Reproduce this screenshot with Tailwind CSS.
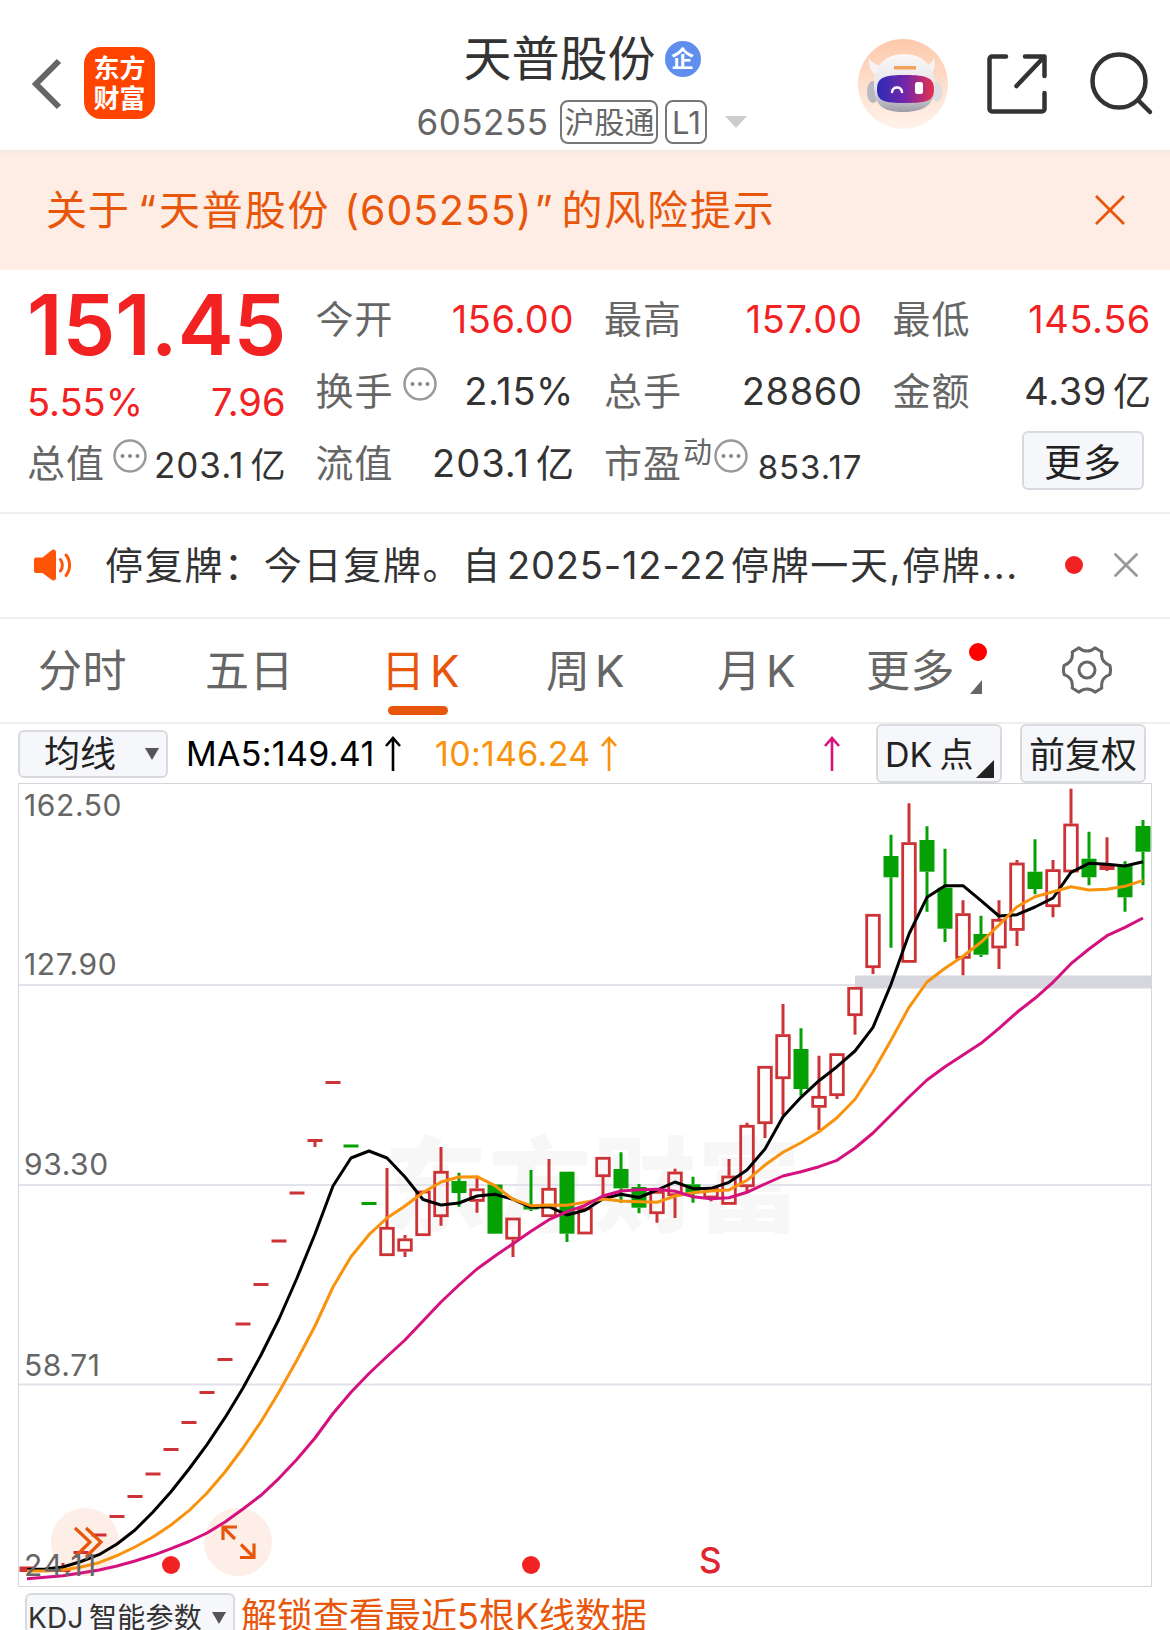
<!DOCTYPE html>
<html lang="zh-CN">
<head>
  <meta charset="UTF-8" />
  <title>天普股份 605255</title>
  <script src="https://cdn.jsdelivr.net/npm/@tailwindcss/browser@4"></script>
</head>
<body class="bg-white text-[#333] w-[1170px] h-[1630px] overflow-hidden font-['Inter','Noto_Sans_CJK_SC',sans-serif] leading-none whitespace-nowrap">

  <!-- Header -->
  <header class="h-[150px] flex items-start relative">
    <svg class="w-[40px] h-[60px] mt-[54px] ml-[26px]" viewBox="0 0 40 60" fill="none" stroke="#666" stroke-width="6"><path d="M33 7 10 30l23 23" /></svg>
    <div class="w-[71px] h-[72px] mt-[47px] ml-[18px] pb-[3px] rounded-[17px] bg-[#ff4400] text-white font-bold text-[26px] leading-[30px] flex flex-col items-center justify-center font-['Noto_Sans_CJK_SC',sans-serif]">
      <span>东方</span>
      <span>财富</span>
    </div>

    <div class="absolute left-[385px] w-[400px] top-0 flex flex-col items-center">
      <div class="flex items-center h-[48px] mt-[35px] gap-[9px] pr-[6px]">
        <h1 class="text-[48px]">天普股份</h1>
        <span class="size-[36px] rounded-full bg-[#5f8eee] text-white text-[23px] font-bold flex items-center justify-center">企</span>
      </div>
      <div class="flex items-center h-[44px] mt-[17px] pr-[6px] text-[#666]">
        <span class="text-[35px] tracking-[0.5px]">605255</span>
        <span class="ml-[12px] h-[44px] w-[98px] border-2 border-[#777] rounded-[8px] text-[30px] flex items-center justify-center">沪股通</span>
        <span class="ml-[7px] h-[44px] w-[42px] border-2 border-[#777] rounded-[8px] text-[31px] flex items-center justify-center">L1</span>
        <svg class="ml-[18px] w-[22px] h-[12px]" viewBox="0 0 22 12"><path d="M0 0h22L11 12z" fill="#ccc" /></svg>
      </div>
    </div>

    <!-- Robot assistant -->
    <svg class="ml-auto mt-[39px] w-[90px] h-[90px]" viewBox="0 0 90 90">
      <defs>
        <linearGradient id="halo" x1="0" y1="0" x2="0" y2="1"><stop offset="0" stop-color="#fdc9ab" /><stop offset="1" stop-color="#fff3ec" /></linearGradient>
        <linearGradient id="shell" x1="0" y1="0" x2="0" y2="1"><stop offset="0" stop-color="#fbf8f8" /><stop offset=".6" stop-color="#e6e3ea" /><stop offset="1" stop-color="#9d9ca6" /></linearGradient>
        <linearGradient id="visor" x1="0" y1="0" x2="1" y2="0"><stop offset="0" stop-color="#2b2bb8" /><stop offset=".5" stop-color="#7426a8" /><stop offset="1" stop-color="#e8304e" /></linearGradient>
      </defs>
      <circle cx="45" cy="45" r="45" fill="url(#halo)" />
      <path d="M11 19c-1 8 2 14 8 18l7-9c-6-1-12-4-15-9zM76 19c2 8 0 14-5 18l-7-9c6-1 10-4 12-9z" fill="#f7f3f4" />
      <ellipse cx="15" cy="53" rx="6" ry="11" fill="#b9b7c0" />
      <ellipse cx="79" cy="53" rx="5" ry="10" fill="#dedce2" />
      <path d="M16 48C15 27 27 15 46 15s31 13 31 32c0 17-9 26-32 26S17 64 16 48z" fill="url(#shell)" />
      <path d="M19 50c0-12 8-14 29-14s28 3 28 14-5 14-28 14-29-2-29-14z" fill="url(#visor)" />
      <path d="M36 27h22v3.500H36z" fill="#f0a25e" />
      <path d="M34 53c1-6 9-6 10 0" fill="none" stroke="#fff" stroke-width="2.500" stroke-linecap="round" />
      <rect x="57" y="43" width="8" height="12" rx="2.500" fill="#fff" />
    </svg>
    <svg class="ml-[36px] mt-[51px] w-[66px] h-[66px]" viewBox="0 0 66 66" fill="none" stroke="#333" stroke-width="4.500" stroke-linecap="round" stroke-linejoin="round">
      <path d="M22 5.500H8a2.500 2.500 0 0 0-2.500 2.500v50A2.500 2.500 0 0 0 8 60.500h50a2.500 2.500 0 0 0 2.500-2.500V42M41 5.500h19.500V25M60 6 32.500 35" />
    </svg>
    <svg class="ml-[37px] mr-[14px] mt-[49px] w-[69px] h-[68px]" viewBox="0 0 69 68" fill="none" stroke="#333" stroke-width="4.500" stroke-linecap="round">
      <circle cx="32" cy="32" r="26.500" /><path d="m51 51 12 12" />
    </svg>
  </header>

  <!-- Risk banner -->
  <div class="h-[120px] pb-[3px] bg-[#fdede4] border-t-[3px] border-[#f3ebe6] flex items-center pl-[46px] pr-[45px] text-[#e8560c] text-[41px]">
    <span class="tracking-[1px]">关于</span>
    <span class="ml-[8px]">“</span>
    <span class="ml-[3px] tracking-[1.800px]">天普股份</span>
    <span class="ml-[14px] tracking-[0.900px]">(605255)</span>
    <span class="ml-[2px]">”</span>
    <span class="ml-[9px] tracking-[1.800px]">的风险提示</span>
    <svg class="ml-auto size-[30px]" viewBox="0 0 30 30" stroke="#e8560c" stroke-width="2.800"><path d="m1 1 28 28M29 1 1 29" /></svg>
  </div>

  <!-- Quote -->
  <section class="h-[244px] pt-[13px] pl-[27px] pr-[19px] border-b-2 border-[#eee] grid grid-cols-4 gap-x-[30px] text-[38px]">
    <div class="flex flex-col text-[#f22222]">
      <div class="h-[84px] flex items-center text-[84px] font-semibold">151.45</div>
      <div class="h-[60px] flex items-center justify-between pt-[10px]"><span>5.55%</span><span>7.96</span></div>
      <div class="h-[72px] flex items-center text-[#333]">
        <span class="text-[#666] tracking-[1px]">总值</span>
        <svg class="ml-[8px] mb-[14px] size-[34px] shrink-0" viewBox="0 0 34 34"><circle cx="17" cy="17" r="15.500" fill="none" stroke="#999" stroke-width="2.500" /><g fill="#888"><circle cx="9.500" cy="17" r="2" /><circle cx="17" cy="17" r="2" /><circle cx="24.500" cy="17" r="2" /></g></svg>
        <span class="ml-auto text-[35px] pt-[5px] tracking-[1px]">203.1<span class="ml-[6px] tracking-normal">亿</span></span>
      </div>
    </div>
    <div>
      <div class="h-[72px] flex items-center justify-between"><span class="text-[#666] tracking-[1px]">今开</span><span class="text-[#f22222] tracking-[0.600px]">156.00</span></div>
      <div class="h-[72px] flex items-center">
        <span class="text-[#666] tracking-[1px]">换手</span>
        <svg class="ml-[9px] mb-[14px] size-[34px] shrink-0" viewBox="0 0 34 34"><circle cx="17" cy="17" r="15.500" fill="none" stroke="#999" stroke-width="2.500" /><g fill="#888"><circle cx="9.500" cy="17" r="2" /><circle cx="17" cy="17" r="2" /><circle cx="24.500" cy="17" r="2" /></g></svg>
        <span class="ml-auto tracking-[0.600px]">2.15%</span>
      </div>
      <div class="h-[72px] flex items-center justify-between"><span class="text-[#666] tracking-[1px]">流值</span><span class="tracking-[1px]">203.1<span class="ml-[6px] tracking-normal">亿</span></span></div>
    </div>
    <div>
      <div class="h-[72px] flex items-center justify-between"><span class="text-[#666] tracking-[1px]">最高</span><span class="text-[#f22222] tracking-[0.600px]">157.00</span></div>
      <div class="h-[72px] flex items-center justify-between"><span class="text-[#666] tracking-[1px]">总手</span><span class="tracking-[0.600px]">28860</span></div>
      <div class="h-[72px] flex items-center">
        <span class="text-[#666] tracking-[1px]">市盈</span>
        <span class="text-[#666] text-[29px] mb-[22px] ml-[1px]">动</span>
        <svg class="ml-[2px] mb-[14px] size-[34px] shrink-0" viewBox="0 0 34 34"><circle cx="17" cy="17" r="15.500" fill="none" stroke="#999" stroke-width="2.500" /><g fill="#888"><circle cx="9.500" cy="17" r="2" /><circle cx="17" cy="17" r="2" /><circle cx="24.500" cy="17" r="2" /></g></svg>
        <span class="ml-auto text-[33px] pt-[9px] tracking-[1px]">853.17</span>
      </div>
    </div>
    <div>
      <div class="h-[72px] flex items-center justify-between"><span class="text-[#666] tracking-[1px]">最低</span><span class="text-[#f22222] tracking-[0.600px]">145.56</span></div>
      <div class="h-[72px] flex items-center justify-between"><span class="text-[#666] tracking-[1px]">金额</span><span class="tracking-[0.600px]">4.39<span class="ml-[6px] tracking-normal">亿</span></span></div>
      <div class="h-[72px] flex items-center justify-end pr-[7px]">
        <button class="w-[122px] h-[59px] mb-[5px] pt-[2px] rounded-[6px] border-2 border-[#d8dadf] bg-[#f6f7fa] text-[#222] tracking-[1px]">更多</button>
      </div>
    </div>
  </section>

  <!-- News ticker -->
  <div class="h-[105px] border-b-2 border-[#eee] flex items-center pl-[33px] pr-[32px] pb-[1px]">
    <svg class="w-[40px] h-[34px]" viewBox="0 0 40 34">
      <path d="M3 9.500h6.500L18.500 2.200c2.200-1.700 4.500-.5 4.500 2v25.600c0 2.500-2.300 3.700-4.500 2L9.500 25H3a2 2 0 0 1-2-2V11.500a2 2 0 0 1 2-2z" fill="#ff5508" />
      <path d="M27.500 11.500c2.300 3.500 2.300 8 0 11.500M33 7c4.800 6 4.800 14.500 0 20.500" fill="none" stroke="#ff5508" stroke-width="3" stroke-linecap="round" />
    </svg>
    <p class="ml-[32px] text-[38px] tracking-[1.700px]">停复牌：今日复牌。自<span class="ml-[5px] tracking-[0.800px]">2025-12-22</span><span class="ml-[4px] tracking-[1.600px]">停牌一天,停牌...</span></p>
    <span class="ml-auto size-[18px] rounded-full bg-[#f22222]"></span>
    <svg class="ml-[31px] size-[24px]" viewBox="0 0 24 24" stroke="#999" stroke-width="2.800" stroke-linecap="round"><path d="m1.500 1.500 21 21M22.500 1.500l-21 21" /></svg>
  </div>

  <!-- Period tabs -->
  <nav class="h-[105px] border-b-2 border-[#eee] flex items-center text-[44px] text-[#666] pl-[38px] pr-[58px]">
    <span class="w-[167px] tracking-[0.500px]">分时</span>
    <span class="w-[176px] tracking-[0.500px]">五日</span>
    <span class="w-[165px] h-full flex items-center relative text-[#e8560c]">日<span class="ml-[5px]">K</span>
      <i class="absolute left-[7px] bottom-[7px] w-[60px] h-[9px] rounded-full bg-[#e8560c]"></i>
    </span>
    <span class="w-[171px]">周<span class="ml-[5px]">K</span></span>
    <span class="w-[149px]">月<span class="ml-[5px]">K</span></span>
    <span class="relative tracking-[0.500px]">更多
      <i class="absolute left-[103px] top-[-6px] size-[18px] rounded-full bg-[#ff0000]"></i>
      <svg class="absolute left-[104px] top-[31px] w-[12px] h-[14px]" viewBox="0 0 12 14"><path d="M12 0v14H0z" fill="#666" /></svg>
    </span>
    <svg class="ml-auto mb-[2px] size-[50px]" viewBox="0 0 50 50" fill="none" stroke="#666" stroke-width="3" stroke-linejoin="round">
      <path d="M17 2.800c4.500 4.300 11.500 4.300 16 0l6.800 4.200c-1 6.300 1.600 11 8 13.300.9 3 .9 6.400 0 9.400-6.400 2.300-9 7-8 13.300L33 47.200c-4.500-4.300-11.500-4.300-16 0L10.200 43c1-6.300-1.600-11-8-13.300-.9-3-.9-6.400 0-9.400 6.400-2.300 9-7 8-13.300z" />
      <circle cx="25" cy="25" r="8" />
    </svg>
  </nav>

  <!-- Indicator bar -->
  <div class="h-[59px] flex items-center pl-[18px] pr-[24px] text-[34px]">
    <button class="w-[150px] h-[48px] rounded-[6px] border-2 border-[#d8dadf] bg-[#f6f7fa] text-[#222] text-[36px] pt-[1px] flex items-center justify-between pl-[24px] pr-[7px]">均线
      <svg class="w-[14px] h-[12px]" viewBox="0 0 14 12"><path d="M0 0h14L7 12z" fill="#555" /></svg>
    </button>
    <span class="ml-[18px] pt-[1px] w-[190px] text-black tracking-[0.300px]">MA5:149.41</span>
    <svg class="ml-[8px] w-[18px] h-[36px]" viewBox="0 0 18 36" fill="none" stroke="#000" stroke-width="2.600"><path d="M9 35V2M2 10l7-8 7 8" /></svg>
    <span class="ml-[33px] pt-[1px] w-[155px] text-[#f9920c] tracking-[0.300px]">10:146.24</span>
    <svg class="ml-[10px] w-[18px] h-[36px]" viewBox="0 0 18 36" fill="none" stroke="#f9920c" stroke-width="2.600"><path d="M9 35V2M2 10l7-8 7 8" /></svg>
    <svg class="ml-auto mr-[35px] w-[18px] h-[36px]" viewBox="0 0 18 36" fill="none" stroke="#d4117f" stroke-width="2.600"><path d="M9 35V2M2 10l7-8 7 8" /></svg>
    <button class="relative w-[126px] h-[59px] pt-[2px] rounded-[6px] border-2 border-[#d8dadf] bg-[#f6f7fa] text-[#222] text-left pl-[7px]">DK<span class="ml-[7px]">点</span>
      <svg class="absolute right-[6px] bottom-[3px] size-[18px]" viewBox="0 0 18 18"><path d="M18 0v18H0z" fill="#222" /></svg>
    </button>
    <button class="ml-[18px] w-[126px] h-[59px] pt-[2px] rounded-[6px] border-2 border-[#d8dadf] bg-[#f6f7fa] text-[#222] text-[36px]">前复权</button>
  </div>

  <!-- Daily K chart -->
  <svg id="chart" class="block w-[1170px] h-[804px] font-['Inter','Noto_Sans_CJK_SC',sans-serif]" viewBox="0 783 1170 804">
    <text x="384" y="1224" font-size="103" letter-spacing="1.500" font-weight="900" fill="#f7f7f7">东方财富</text>
    <g fill="none" stroke="#e2e3ea" stroke-width="2">
      <path d="M19 985h1132M19 1185h1132M19 1384.500h1132" />
      <path d="M18.500 783.500h1133v803h-1133z" stroke="#d3d5d9" stroke-width="1" />
    </g>
    <path d="M855 975.500h296v13H855z" fill="#d5d6de" />
    <circle cx="85" cy="1542" r="34" fill="#fdeee7" />
    <circle cx="238" cy="1542" r="34" fill="#fdeee7" />
    <g id="candles"></g>
    <g id="lines" fill="none" stroke-width="3" stroke-linejoin="round"></g>
    <g fill="none" stroke="#e8560c" stroke-width="3.200">
      <path d="m75 1528 15 14-15 15M86 1528l15 14-15 15" />
      <path d="M237 1527h-14v13M223 1527l12 12M240 1557.500h14v-14M254 1557.500l-13-13" />
    </g>
    <g font-size="30" letter-spacing="0.600" fill="#666">
      <text x="24" y="816">162.50</text>
      <text x="24" y="975">127.90</text>
      <text x="24" y="1175">93.30</text>
      <text x="24" y="1376">58.71</text>
      <text x="24" y="1576" letter-spacing="1.400">24.11</text>
    </g>
    <g fill="#f22222">
      <circle cx="171" cy="1565" r="9" />
      <circle cx="531" cy="1565" r="9" />
      <text x="699" y="1573" font-size="35" font-weight="500" fill="#e0252f">S</text>
    </g>
  </svg>

  <!-- Sub indicator -->
  <div class="pt-[6px] pl-[25px] flex items-start">
    <button class="w-[210px] h-[50px] rounded-[6px] border-2 border-[#d8dadf] bg-[#f6f7fa] text-[#333] text-[28px] flex items-center justify-between pl-[1px] pr-[7px]"><span class="tracking-[0.300px]">KDJ<span class="ml-[5px]">智能参数</span></span>
      <svg class="w-[14px] h-[12px]" viewBox="0 0 14 12"><path d="M0 0h14L7 12z" fill="#555" /></svg>
    </button>
    <span class="ml-[6px] mt-[5px] text-[36px] text-[#e8560c]">解锁查看最近5根K线数据</span>
  </div>

  <script>
    // one entry per day: color, high, top, bottom, low
    const days = [
      ['r', 1566.5, 1566.5, 1572, 1572], ['r', 1568, 1568, 1571, 1571], ['r', 1563, 1569, 1572, 1572], ['r', 1551, 1551, 1554, 1554],
      ['r', 1533.5, 1533.5, 1536.5, 1536.5], ['r', 1515, 1515, 1518, 1518], ['r', 1495, 1495, 1498, 1498], ['r', 1472.5, 1472.5, 1475.5, 1475.5],
      ['r', 1448, 1448, 1451, 1451], ['r', 1421, 1421, 1424, 1424], ['r', 1391, 1391, 1394, 1394], ['r', 1358, 1358, 1361, 1361],
      ['r', 1322.5, 1322.5, 1325.5, 1325.5], ['r', 1283, 1283, 1286, 1286], ['r', 1239.5, 1239.5, 1242.5, 1242.5], ['r', 1191.5, 1191.5, 1194.5, 1194.5],
      ['r', 1139, 1139, 1142, 1147], ['r', 1081, 1081, 1084, 1084], ['g', 1144.5, 1144.5, 1147.5, 1147.5], ['g', 1202, 1202, 1205, 1205],
      ['r', 1168, 1227, 1256, 1256], ['r', 1235, 1238.5, 1251.5, 1257], ['r', 1190.7, 1190.7, 1236, 1236], ['r', 1147, 1171, 1217, 1225.7],
      ['g', 1172.7, 1181, 1193, 1206.7], ['r', 1177, 1188.5, 1201.7, 1212.7], ['g', 1184.5, 1184.5, 1233.7, 1233.7], ['r', 1217.7, 1217.7, 1239.5, 1257],
      ['g', 1170, 1205.5, 1209.5, 1211], ['r', 1159, 1188, 1217, 1217], ['g', 1171.7, 1171.7, 1233.7, 1242], ['r', 1207.5, 1207.5, 1234.3, 1234.3],
      ['r', 1157, 1157, 1177, 1196], ['g', 1152.3, 1169, 1188.3, 1202.7], ['g', 1184, 1187, 1207.7, 1213.3], ['r', 1191, 1191, 1214, 1222.7],
      ['r', 1168.7, 1171.7, 1196, 1218], ['g', 1176.7, 1184.3, 1193.3, 1202.7], ['r', 1187.3, 1187.3, 1198.3, 1201.3], ['r', 1159, 1175.7, 1204.7, 1204.7],
      ['r', 1122.7, 1125, 1187, 1191.7], ['r', 1066, 1066, 1124, 1138], ['r', 1004, 1034.3, 1079, 1115], ['g', 1028.3, 1049, 1089, 1095.7],
      ['r', 1055.7, 1096, 1107.7, 1130], ['r', 1053.3, 1053.3, 1096, 1099], ['r', 987, 987, 1016, 1034.7], ['r', 914, 914, 968, 974],
      ['g', 834.7, 856, 877.3, 947.7], ['r', 803.3, 842.3, 962.7, 962.7], ['g', 826.3, 840, 871.7, 911.7], ['g', 848.7, 887.7, 928.7, 942],
      ['r', 900.3, 913.3, 958.7, 975.3], ['g', 915.7, 934, 954.7, 957], ['r', 900.3, 919, 948.3, 969], ['r', 860, 862.7, 930.7, 946],
      ['g', 839.3, 871.7, 889, 894.3], ['r', 860, 869.3, 907, 917.3], ['r', 788.7, 823.7, 872.3, 872.3], ['g', 831.7, 858.7, 877.3, 885.3],
      ['r', 837.3, 865, 870, 871], ['g', 861.3, 865.7, 897.3, 911.7], ['g', 820, 826, 851.7, 885.3],
    ];
    const ma = {
      '#000': [1569.5, 1569, 1567, 1561.5, 1554.7, 1544, 1530, 1512, 1491.7, 1469, 1444.7, 1417.7, 1388, 1355, 1319, 1278, 1234, 1186, 1158, 1151, 1158, 1177, 1199.5, 1205, 1203, 1196, 1194.3, 1199.3, 1207.3, 1206.7, 1215, 1210.3, 1198.7, 1194.3, 1197.5, 1190, 1182, 1188.7, 1188.3, 1182.3, 1170, 1149, 1116.7, 1097.3, 1080.7, 1066.7, 1051, 1027.3, 984.3, 934, 897.3, 885.7, 885.7, 900.7, 916, 914.7, 907, 898, 872.3, 863.3, 864.3, 866, 861.7],
      '#f9920c': [1571, 1571, 1570, 1567, 1562.7, 1555.7, 1547, 1537, 1525, 1510.7, 1493, 1472, 1448, 1421.7, 1392, 1360, 1326, 1287, 1256.7, 1234.7, 1218, 1206, 1192.5, 1182, 1177, 1176.7, 1185.7, 1199.3, 1205.7, 1205, 1205.3, 1202.3, 1199, 1201, 1201.7, 1202.3, 1196, 1192.7, 1191, 1190, 1180.3, 1165, 1152.3, 1142.7, 1131.7, 1117.7, 1099.3, 1071.7, 1040.3, 1007.3, 982, 968.3, 956.3, 942.3, 925, 906.7, 896.7, 891.7, 886.7, 890, 889.3, 886.3, 880.3],
      '#d4117f': [1578.7, 1577.3, 1575.7, 1573, 1570, 1566, 1561, 1555.3, 1548.7, 1541.5, 1533, 1522, 1509, 1495.3, 1478.3, 1459.3, 1438, 1413.5, 1392.3, 1373.5, 1356.5, 1340, 1321, 1302, 1285, 1269, 1256, 1243.7, 1231.3, 1219.7, 1211.7, 1205.3, 1196, 1191, 1189.7, 1189.3, 1191.3, 1196.7, 1198.7, 1197.7, 1192.3, 1184, 1176, 1171.7, 1166.7, 1160.3, 1148, 1133, 1115, 1097, 1080, 1066.7, 1055, 1043.3, 1028.3, 1012.3, 998.3, 982.3, 963.7, 949, 935.7, 927.3, 918],
    };
    const color = { r: '#cd3236', g: '#04a004' };
    const cx = (i) => 27 + i * 18;

    document.getElementById('candles').innerHTML = days.map(([c, high, top, bottom, low], i) => {
      const x = cx(i);
      const hollow = c === 'r' && bottom - top > 6;
      const body = hollow
        ? `<rect x="${x - 6.3}" y="${top + 1.3}" width="12.600" height="${bottom - top - 2.6}" fill="none" stroke="${color.r}" stroke-width="2.800"/>`
        : `<rect x="${x - 7.5}" y="${top}" width="15" height="${bottom - top}" fill="${color[c]}"/>`;
      return `<path d="M${x} ${high}V${top}M${x} ${bottom}V${low}" stroke="${color[c]}" stroke-width="3"/>${body}`;
    }).join('');

    document.getElementById('lines').innerHTML = Object.entries(ma).map(([stroke, ys]) =>
      `<polyline stroke="${stroke}" points="${ys.map((y, i) => `${cx(i)},${y}`).join(' ')}"/>`
    ).join('');
  </script>
</body>
</html>
